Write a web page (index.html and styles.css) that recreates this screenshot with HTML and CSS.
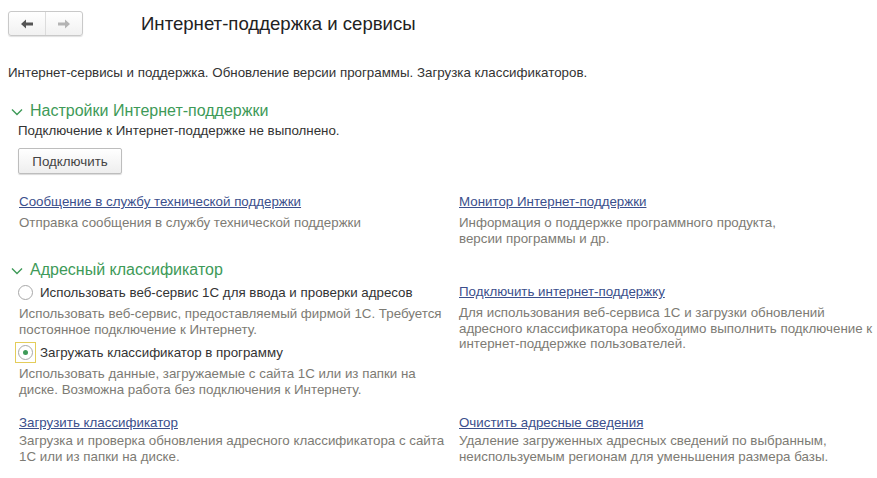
FILE: index.html
```html
<!DOCTYPE html>
<html lang="ru">
<head>
<meta charset="utf-8">
<title>Интернет-поддержка и сервисы</title>
<link rel="stylesheet" href="styles.css">
</head>
<body>
<div class="page">
  <div class="topbar">
    <div class="nav">
      <span class="nav-btn">
        <svg width="14" height="10" viewBox="0 0 14 10"><path d="M1 5 L6 0.5 L6 3.5 L13 3.5 L13 6.5 L6 6.5 L6 9.5 Z" fill="#555"/></svg>
      </span>
      <span class="nav-btn">
        <svg width="14" height="10" viewBox="0 0 14 10"><path d="M13 5 L8 0.5 L8 3.5 L1 3.5 L1 6.5 L8 6.5 L8 9.5 Z" fill="#b4b4b4"/></svg>
      </span>
    </div>
    <h1 class="title">Интернет-поддержка и сервисы</h1>
  </div>

  <p class="intro">Интернет-сервисы и поддержка. Обновление версии программы. Загрузка классификаторов.</p>

  <section class="group">
    <h2 class="group-title">
      <svg class="chev" width="12" height="8" viewBox="0 0 12 8"><polyline points="1,1.5 6,6.5 11,1.5" fill="none" stroke="#3e9a58" stroke-width="1.4"/></svg>
      Настройки Интернет-поддержки
    </h2>
    <div class="group-body">
      <p class="status">Подключение к Интернет-поддержке не выполнено.</p>
      <button class="btn">Подключить</button>
      <div class="cols cols-first">
        <div class="item">
          <a class="link" href="#">Сообщение в службу технической поддержки</a>
          <p class="hint">Отправка сообщения в службу технической поддержки</p>
        </div>
        <div class="item">
          <a class="link" href="#">Монитор Интернет-поддержки</a>
          <p class="hint">Информация о поддержке программного продукта,<br>версии программы и др.</p>
        </div>
      </div>
    </div>
  </section>

  <section class="group group-second">
    <h2 class="group-title">
      <svg class="chev" width="12" height="8" viewBox="0 0 12 8"><polyline points="1,1.5 6,6.5 11,1.5" fill="none" stroke="#3e9a58" stroke-width="1.4"/></svg>
      Адресный классификатор
    </h2>
    <div class="group-body">
      <div class="cols">
        <div class="item item-left">
          <label class="radio-row">
            <span class="radio-wrap"><span class="radio"></span></span>
            Использовать веб-сервис 1С для ввода и проверки адресов
          </label>
          <p class="hint radio-hint">Использовать веб-сервис, предоставляемый фирмой 1С. Требуется<br>постоянное подключение к Интернету.</p>
          <label class="radio-row radio-row-second">
            <span class="radio-wrap focused"><span class="radio checked"></span></span>
            Загружать классификатор в программу
          </label>
          <p class="hint radio-hint">Использовать данные, загружаемые с сайта 1С или из папки на<br>диске. Возможна работа без подключения к Интернету.</p>
        </div>
        <div class="item item-right-top">
          <a class="link" href="#">Подключить интернет-поддержку</a>
          <p class="hint">Для использования веб-сервиса 1С и загрузки обновлений<br>адресного классификатора необходимо выполнить подключение к<br>интернет-поддержке пользователей.</p>
        </div>
      </div>
      <div class="cols cols-last">
        <div class="item">
          <a class="link" href="#">Загрузить классификатор</a>
          <p class="hint tight">Загрузка и проверка обновления адресного классификатора с сайта<br>1С или из папки на диске.</p>
        </div>
        <div class="item">
          <a class="link" href="#">Очистить адресные сведения</a>
          <p class="hint tight">Удаление загруженных адресных сведений по выбранным,<br>неиспользуемым регионам для уменьшения размера базы.</p>
        </div>
      </div>
    </div>
  </section>
</div>
</body>
</html>
```

FILE: styles.css
```css
* { box-sizing: border-box; }

html, body {
  margin: 0;
  padding: 0;
  background: #ffffff;
}

body {
  font-family: "Liberation Sans", Arial, sans-serif;
  font-size: 13.33px;
  color: #333333;
  width: 877px;
  height: 478px;
  overflow: hidden;
}

.page {
  padding: 11px 0 0 8px;
}

p { margin: 0; }

.topbar {
  display: flex;
  align-items: center;
  height: 25px;
}

.nav {
  display: flex;
  width: 75px;
  height: 25px;
  border: 1px solid #c9c9c9;
  border-radius: 3px;
  background: linear-gradient(#ffffff, #f1f1f1);
  box-shadow: 0 1px 1px rgba(0, 0, 0, 0.12);
}

.nav-btn {
  flex: 1;
  display: flex;
  align-items: center;
  justify-content: center;
}

.nav-btn + .nav-btn {
  border-left: 1px solid #dcdcdc;
}

.title {
  margin: 0 0 0 58px;
  font-size: 18.6px;
  font-weight: normal;
  color: #222222;
  line-height: 25px;
}

.intro {
  margin-top: 29px;
  line-height: 16px;
  color: #333333;
}

.group {
  margin-top: 20px;
}

.group-title {
  margin: 0;
  display: flex;
  align-items: center;
  font-size: 16px;
  font-weight: normal;
  color: #3e9a58;
  line-height: 20px;
  height: 20px;
}

.chev {
  margin: 1px 7px 0 3px;
}

.group-body {
  padding-left: 10px;
}

.status {
  margin-top: 2px;
  line-height: 16px;
}

.btn {
  display: block;
  margin-top: 9px;
  width: 104px;
  height: 26px;
  padding: 0;
  font-family: "Liberation Sans", Arial, sans-serif;
  font-size: 13.33px;
  color: #444444;
  border: 1px solid #bdbdbd;
  border-radius: 2px;
  background: linear-gradient(#ffffff, #eeeeee);
  box-shadow: 0 1px 1px rgba(0, 0, 0, 0.15);
}

.cols {
  display: grid;
  grid-template-columns: 441px 1fr;
}

.cols-first {
  margin-top: 20px;
}

.cols > .item:first-child {
  padding-left: 1px;
}

.cols > .item.item-left {
  padding-left: 0;
}

.item {
  display: flex;
  flex-direction: column;
  align-items: flex-start;
}

.link {
  color: #3b4f8c;
  text-decoration: underline;
  text-decoration-color: #3b4f8c;
  line-height: 16px;
  white-space: nowrap;
}

.hint {
  color: #7d7b74;
  line-height: 15.5px;
  margin-top: 5px;
  white-space: nowrap;
}

.hint.tight {
  margin-top: 2px;
}

.item-left .hint {
  padding-left: 1px;
}

.hint.radio-hint {
  margin-top: 4px;
}

.group-second {
  margin-top: 14px;
}

.radio-row {
  display: flex;
  align-items: center;
  height: 20px;
  margin-top: 2px;
  color: #333333;
  white-space: nowrap;
}

.radio-wrap {
  display: flex;
  align-items: center;
  justify-content: center;
  width: 21px;
  height: 21px;
  margin: 0 4px 0 -3px;
  border: 1px solid transparent;
}

.radio-wrap.focused {
  border-color: #e4cd5a;
}

.radio {
  width: 15px;
  height: 15px;
  border: 1px solid #a8a8a8;
  border-radius: 50%;
  background: #ffffff;
  display: flex;
  align-items: center;
  justify-content: center;
}

.radio.checked::after {
  content: "";
  width: 5px;
  height: 5px;
  border-radius: 50%;
  background: #3e9a58;
}

.radio-row-second {
  margin-top: 5px;
}

.item-right-top {
  padding-top: 4px;
}

.cols-last {
  margin-top: 18px;
}
```
